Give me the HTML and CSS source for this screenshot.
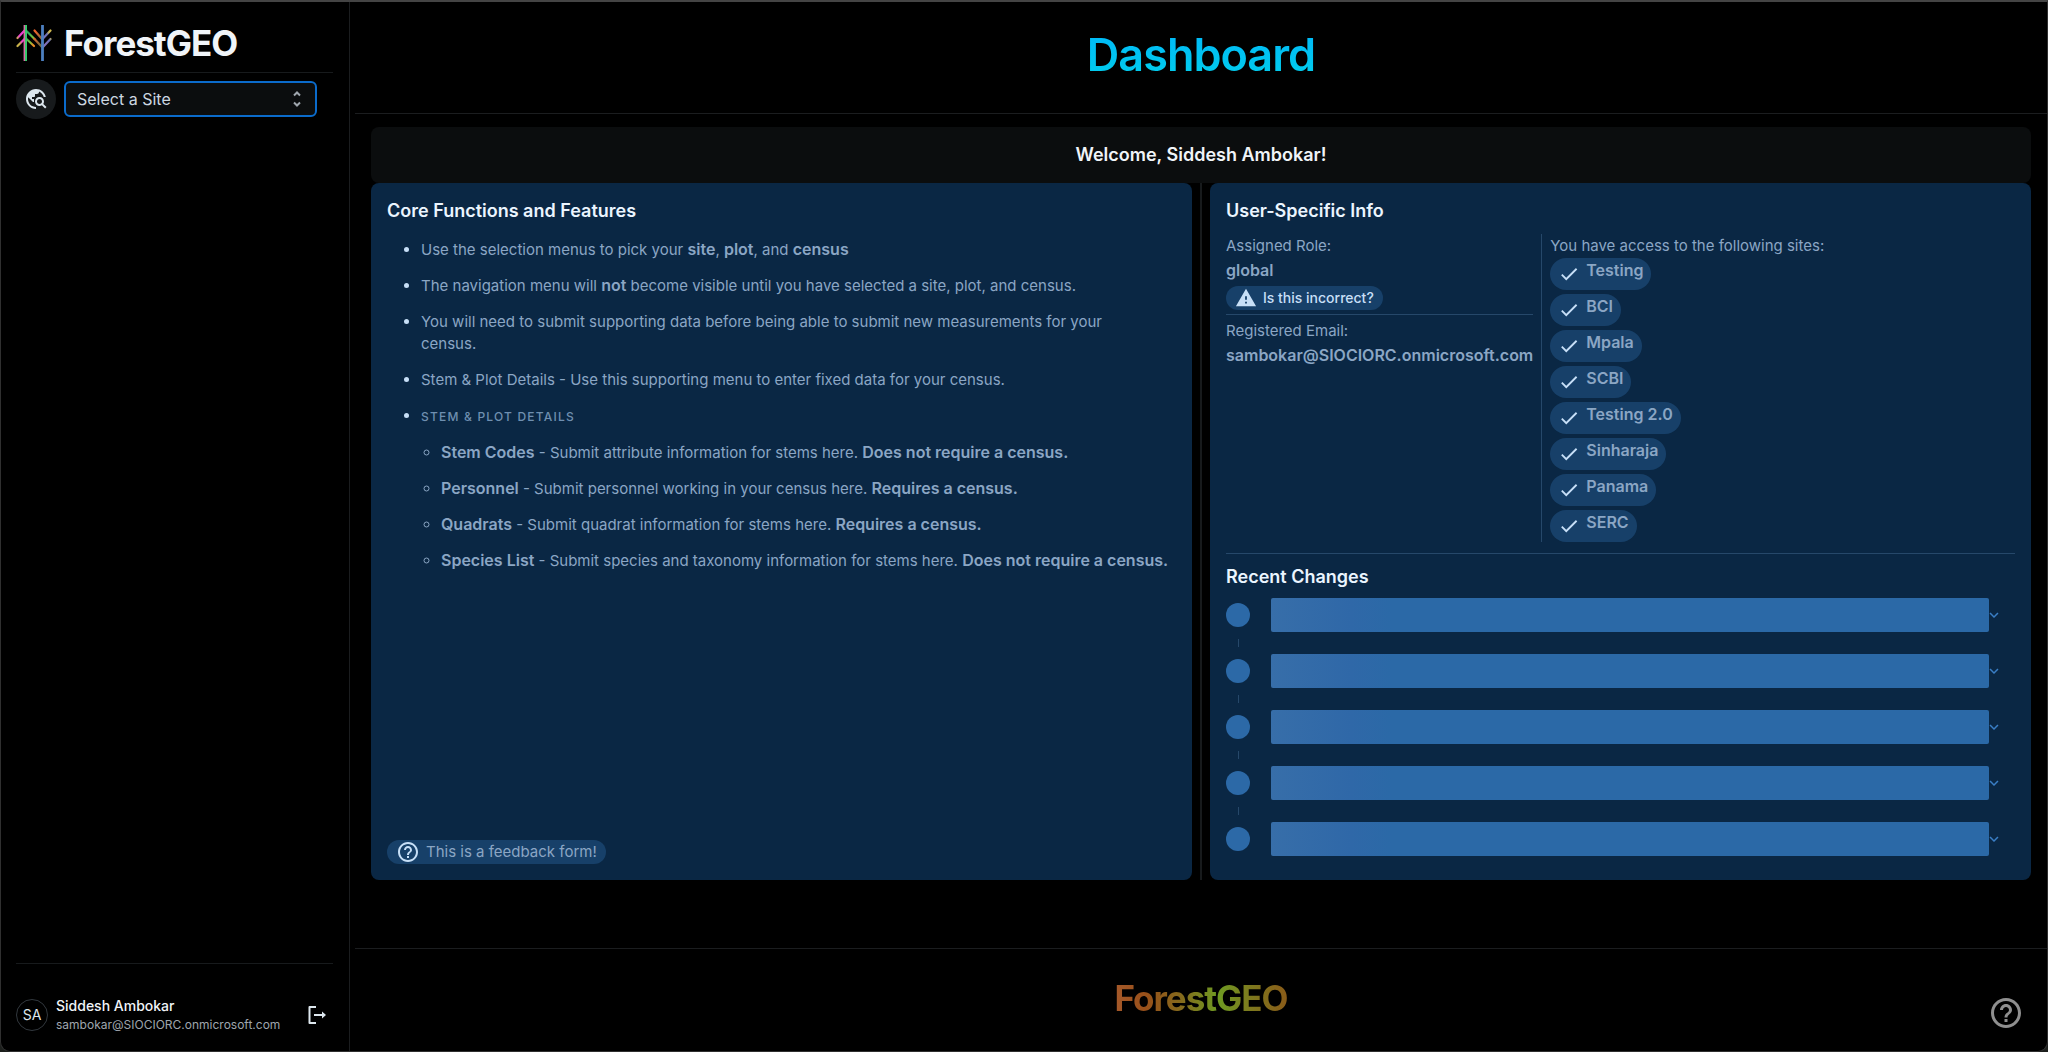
FILE: index.html
```html
<!DOCTYPE html>
<html lang="en">
<head>
<meta charset="utf-8">
<meta name="viewport" content="width=device-width, initial-scale=1">
<title>ForestGEO Dashboard</title>
<link rel="stylesheet" href="styles.css">
</head>
<body>
<svg class="sprite" aria-hidden="true">
  <symbol id="i-help" viewBox="0 0 24 24"><path d="M11 18h2v-2h-2v2zm1-16C6.48 2 2 6.48 2 12s4.480 10 10 10 10-4.480 10-10S17.520 2 12 2zm0 18c-4.410 0-8-3.590-8-8s3.590-8 8-8 8 3.590 8 8-3.590 8-8 8zm0-14c-2.210 0-4 1.790-4 4h2c0-1.100.9-2 2-2s2 .9 2 2c0 2-3 1.750-3 5h2c0-2.250 3-2.500 3-5 0-2.210-1.790-4-4-4z"/></symbol>
  <symbol id="i-check" viewBox="0 0 24 24"><path d="M9 16.170 4.830 12l-1.420 1.410L9 19 21 7l-1.410-1.410z"/></symbol>
  <symbol id="i-down" viewBox="0 0 24 24"><path d="M7.410 8.590 12 13.170l4.590-4.580L18 10l-6 6-6-6z"/></symbol>
</svg>
<div class="app">
  <aside class="sidebar">
    <div class="brand">
      <svg class="brand-mark" viewBox="0 0 36 36" aria-hidden="true">
        <defs>
          <linearGradient id="g1" x1="1" y1="0" x2="0" y2="1"><stop offset=".55" stop-color="#e83fd0"/><stop offset=".8" stop-color="#c9b24a"/></linearGradient>
          <linearGradient id="g2" x1="0" y1="0" x2="1" y2="1"><stop offset=".2" stop-color="#2fae5c"/><stop offset=".6" stop-color="#7fc13a"/><stop offset=".9" stop-color="#f08a24"/></linearGradient>
          <linearGradient id="g3" x1="0" y1="0" x2="1" y2="1"><stop offset=".1" stop-color="#f0642a"/><stop offset=".8" stop-color="#7a6a3c"/></linearGradient>
          <linearGradient id="g4" x1="0" y1="1" x2="1" y2="0"><stop offset=".2" stop-color="#8470b8"/><stop offset=".65" stop-color="#6a72b8"/><stop offset=".85" stop-color="#cdb84e"/></linearGradient>
        </defs>
        <g fill="none" stroke-width="2.200" stroke-linecap="round">
          <path stroke="url(#g1)" d="M9 5 1.500 13M9 13.500 1.500 21"/>
          <path stroke="url(#g2)" d="M10.500 6 18.500 14M10.500 14 18 21"/>
          <path stroke="url(#g3)" d="M18.500 5.500 26 14M18.500 14 26 22"/>
          <path stroke="url(#g4)" d="M27 13.500 34.500 5.500M27 22 34.500 14"/>
        </g>
        <path d="M8.300 0v36" stroke="#d96aa6" stroke-width="1.400"/>
        <path d="M10 0v36" stroke="#37c66b" stroke-width="2"/>
        <path d="M26.500 0v36" stroke="#4c7fc0" stroke-width="2.800"/>
      </svg>
      <span class="wordmark">ForestGEO</span>
    </div>
    <div class="site-row">
      <span class="site-avatar">
        <svg viewBox="0 0 24 24" aria-hidden="true"><path d="M19.300 16.900c.4-.7.7-1.500.7-2.400 0-2.500-2-4.500-4.500-4.500S11 12 11 14.500s2 4.500 4.500 4.500c.9 0 1.700-.3 2.400-.7l3.200 3.200 1.400-1.400-3.200-3.200zm-3.800.1c-1.400 0-2.500-1.100-2.500-2.500s1.100-2.500 2.500-2.500 2.500 1.100 2.500 2.500-1.100 2.500-2.500 2.500zM12 20v2C6.480 22 2 17.520 2 12S6.480 2 12 2c4.840 0 8.870 3.440 9.800 8h-2.070c-.64-2.460-2.400-4.470-4.730-5.410V5c0 1.100-.9 2-2 2h-2v2c0 .55-.45 1-1 1H8v2h2v3H9l-4.790-4.790C4.080 10.790 4 11.380 4 12c0 4.410 3.590 8 8 8z"/></svg>
      </span>
      <div class="select-wrap">
        <select class="site-select" aria-label="Select a Site"><option>Select a Site</option></select>
        <svg class="select-arrows" viewBox="0 0 16 24" aria-hidden="true"><path d="m5 8.500 3-3 3 3M5 15.500l3 3 3-3"/></svg>
      </div>
    </div>
    <div class="account">
      <span class="user-avatar">SA</span>
      <div class="user-text">
        <span class="user-name">Siddesh Ambokar</span>
        <span class="user-mail">sambokar@SIOCIORC.onmicrosoft.com</span>
      </div>
      <button class="logout" type="button" aria-label="Log out">
        <svg viewBox="0 0 20 20" aria-hidden="true"><path d="M9 2H2.500v16H9M7 10h10" fill="none" stroke="currentColor" stroke-width="2" stroke-linejoin="round"/><path d="m15 6.500 4 3.500-4 3.500z" fill="currentColor"/></svg>
      </button>
    </div>
  </aside>
  <main class="main">
    <header class="page-header"><h1>Dashboard</h1></header>
    <div class="content">
      <div class="welcome">Welcome, Siddesh Ambokar!</div>
      <div class="cards">
        <section class="card">
          <h2>Core Functions and Features</h2>
          <ul class="features">
            <li>Use the selection menus to pick your <b>site</b>, <b>plot</b>, and <b>census</b></li>
            <li>The navigation menu will <b>not</b> become visible until you have selected a site, plot, and census.</li>
            <li>You will need to submit supporting data before being able to submit new measurements for your<br>census.</li>
            <li>Stem &amp; Plot Details - Use this supporting menu to enter fixed data for your census.</li>
            <li><span class="overline">Stem &amp; Plot Details</span>
              <ul class="sub">
                <li><b>Stem Codes</b> - Submit attribute information for stems here. <b>Does not require a census.</b></li>
                <li><b>Personnel</b> - Submit personnel working in your census here. <b>Requires a census.</b></li>
                <li><b>Quadrats</b> - Submit quadrat information for stems here. <b>Requires a census.</b></li>
                <li><b>Species List</b> - Submit species and taxonomy information for stems here. <b>Does not require a census.</b></li>
              </ul>
            </li>
          </ul>
          <button class="chip feedback" type="button"><svg viewBox="0 0 24 24" aria-hidden="true"><use href="#i-help"/></svg>This is a feedback form!</button>
        </section>
        <div class="split"></div>
        <section class="card">
          <h2>User-Specific Info</h2>
          <div class="info">
            <div class="info-left">
              <span>Assigned Role:</span>
              <b>global</b>
              <button class="chip incorrect" type="button"><svg viewBox="0 0 24 24" aria-hidden="true"><path d="M1 21h22L12 2 1 21zm12-3h-2v-2h2v2zm0-4h-2v-4h2v4z"/></svg>Is this incorrect?</button>
              <hr>
              <span>Registered Email:</span>
              <b>sambokar@SIOCIORC.onmicrosoft.com</b>
            </div>
            <div class="info-right">
              <span>You have access to the following sites:</span>
              <ul class="sites">
                <li class="chip"><svg viewBox="0 0 24 24"><use href="#i-check"/></svg><b>Testing</b></li>
                <li class="chip"><svg viewBox="0 0 24 24"><use href="#i-check"/></svg><b>BCI</b></li>
                <li class="chip"><svg viewBox="0 0 24 24"><use href="#i-check"/></svg><b>Mpala</b></li>
                <li class="chip"><svg viewBox="0 0 24 24"><use href="#i-check"/></svg><b>SCBI</b></li>
                <li class="chip"><svg viewBox="0 0 24 24"><use href="#i-check"/></svg><b>Testing 2.0</b></li>
                <li class="chip"><svg viewBox="0 0 24 24"><use href="#i-check"/></svg><b>Sinharaja</b></li>
                <li class="chip"><svg viewBox="0 0 24 24"><use href="#i-check"/></svg><b>Panama</b></li>
                <li class="chip"><svg viewBox="0 0 24 24"><use href="#i-check"/></svg><b>SERC</b></li>
              </ul>
            </div>
          </div>
          <hr>
          <h2>Recent Changes</h2>
          <ul class="changes">
            <li><span class="dot"></span><span class="bar"></span><button type="button" aria-label="Expand"><svg viewBox="0 0 24 24"><use href="#i-down"/></svg></button></li>
            <li><span class="dot"></span><span class="bar"></span><button type="button" aria-label="Expand"><svg viewBox="0 0 24 24"><use href="#i-down"/></svg></button></li>
            <li><span class="dot"></span><span class="bar"></span><button type="button" aria-label="Expand"><svg viewBox="0 0 24 24"><use href="#i-down"/></svg></button></li>
            <li><span class="dot"></span><span class="bar"></span><button type="button" aria-label="Expand"><svg viewBox="0 0 24 24"><use href="#i-down"/></svg></button></li>
            <li><span class="dot"></span><span class="bar"></span><button type="button" aria-label="Expand"><svg viewBox="0 0 24 24"><use href="#i-down"/></svg></button></li>
          </ul>
        </section>
      </div>
    </div>
    <footer class="footer"><span class="wordmark tinted">ForestGEO</span></footer>
  </main>
  <button class="help" type="button" aria-label="Help"><svg viewBox="0 0 24 24"><use href="#i-help"/></svg></button>
</div>
</body>
</html>
```
FILE: styles.css
```css
*, *::before, *::after { box-sizing: border-box; }

body {
  margin: 0;
  background: #1c1f1c;
  color: #8ba6c4;
  font: 400 15px/24px Inter, "Liberation Sans", sans-serif;
}

h1, h2, ul { margin: 0; padding: 0; }
button { border: 0; padding: 0; background: none; font: inherit; color: inherit; cursor: pointer; }
svg { display: block; fill: currentColor; flex: none; }
b { font-size: 16px; font-weight: 600; }
.sprite { position: absolute; width: 0; height: 0; }

.app {
  position: relative;
  display: flex;
  min-height: 100vh;
  background: #000;
  border: 1px solid #303030;
  border-top: 2px solid #444;
  border-radius: 0 0 10px 10px;
}

/* Sidebar */
.sidebar {
  display: flex;
  flex-direction: column;
  width: 349px;
  flex: none;
  padding: 16px 16px 17px 15px;
  border-right: 1px solid #1b1d1f;
}
.brand {
  display: flex;
  align-items: center;
  gap: 12px;
  height: 55px;
  padding-bottom: 4px;
  border-bottom: 1px solid #171a1c;
}
.brand-mark { width: 36px; height: 36px; }
.wordmark { font-size: 35px; line-height: 40px; font-weight: 700; letter-spacing: -1px; color: #f0f4f8; }
.site-row { display: flex; align-items: center; gap: 8px; padding: 6px 16px 0 0; }
.site-avatar {
  display: grid;
  place-items: center;
  width: 40px;
  height: 40px;
  border-radius: 50%;
  background: #171a1c;
  color: #dde7ee;
}
.site-avatar svg { width: 24px; height: 24px; }
.select-wrap { position: relative; flex: 1; }
.site-select {
  display: block;
  appearance: none;
  width: 100%;
  height: 36px;
  padding: 0 32px 0 11px;
  border: 2px solid #0b6bcb;
  border-radius: 6px;
  background: #0b0d0e;
  color: #cdd7e1;
  font: inherit;
  font-size: 16px;
}
.select-arrows {
  position: absolute;
  right: 12px;
  top: 6px;
  width: 16px;
  height: 24px;
  fill: none;
  stroke: #9fa6ad;
  stroke-width: 2;
  pointer-events: none;
}
.account {
  display: flex;
  align-items: center;
  gap: 8px;
  margin-top: auto;
  padding-top: 32px;
  border-top: 1px solid #171a1c;
}
.user-avatar {
  display: grid;
  place-items: center;
  width: 32px;
  height: 32px;
  border: 1px solid #32383e;
  border-radius: 50%;
  color: #dde7ee;
  font-size: 14px;
}
.user-text { display: flex; flex-direction: column; flex: 1; }
.user-name { color: #f0f4f8; font-size: 14px; line-height: 20px; font-weight: 500; }
.user-mail { color: #9fa6ad; font-size: 12px; line-height: 18px; }
.logout { margin-right: 6px; color: #dde7ee; }
.logout svg { width: 20px; height: 20px; }

/* Main column */
.main { display: flex; flex-direction: column; flex: 1; min-width: 0; padding-left: 5px; }
.page-header {
  display: grid;
  place-items: center;
  height: 112px;
  padding-bottom: 6px;
  border-bottom: 1px solid #1b1d1f;
}
h1 {
  font-size: 45px;
  line-height: 56px;
  font-weight: 600;
  letter-spacing: -1px;
  background: linear-gradient(#00b7fa, #01cfea);
  background-clip: text;
  color: transparent;
}
.content { flex: 1; padding: 13px 16px; }
.welcome {
  padding: 16px;
  border-radius: 8px;
  background: #0b0d0e;
  color: #f0f4f8;
  font-size: 18px;
  font-weight: 600;
  text-align: center;
}
.cards { display: grid; grid-template-columns: 1fr 2px 1fr; gap: 8px; }
.split { background: #171a1c; }
.card {
  display: flex;
  flex-direction: column;
  min-width: 0;
  padding: 16px 16px 24px;
  border-radius: 8px;
  background: #0a2744;
}
.card:first-child { padding-bottom: 16px; }
h2 { color: #ebf5ff; font-size: 18px; line-height: 24px; font-weight: 600; }
hr { height: 1px; margin: 0; border: 0; background: #26486a; width: 100%; }

.features { margin-top: 9px; padding-left: 34px; line-height: 22px; }
.features li { padding: 7px 0; }
.features b { line-height: 20px; }
.features > li::marker { color: #c7dff7; }
.overline {
  display: block;
  color: #6f8fb0;
  font-size: 12px;
  font-weight: 500;
  letter-spacing: 0.1em;
  text-transform: uppercase;
}
.sub { padding: 7px 0 0 20px; list-style: circle; }
.sub li:last-child { padding-bottom: 0; }

.chip {
  display: flex;
  align-items: center;
  align-self: flex-start;
  gap: 6px;
  height: 24px;
  padding: 0 9px;
  border-radius: 16px;
  background: #174069;
}
.chip svg { color: #c7dff7; }
.feedback { margin-top: auto; }
.feedback svg { width: 24px; height: 24px; }
.incorrect { color: #c7dff7; font-size: 14px; font-weight: 500; }
.incorrect svg { width: 22px; height: 24px; }

.info { display: flex; margin-top: 11px; }
.info-left { display: flex; flex-direction: column; padding-right: 8px; border-right: 1px solid #26486a; }
.info-left .chip { margin-top: 4px; }
.info-left hr { margin: 4px 0; }
.info-right { padding-left: 8px; }
.sites { display: flex; flex-direction: column; gap: 4px; list-style: none; }
.sites .chip { height: 32px; padding: 0 8px; }
.sites svg { width: 22px; height: 24px; }
.sites b { padding-bottom: 8px; }
.info + hr { margin: 11px 0; }

.changes { display: flex; flex-direction: column; gap: 22px; margin-top: 9px; list-style: none; }
.changes li { position: relative; display: flex; align-items: center; height: 34px; padding-right: 16px; }
.changes li + li::before {
  content: "";
  position: absolute;
  left: 12px;
  top: -15px;
  width: 1px;
  height: 8px;
  background: #26486a;
}
.dot { width: 24px; height: 24px; margin-right: 21px; border-radius: 50%; background: #2c69a7; }
.bar {
  flex: 1;
  height: 34px;
  border-radius: 2px;
  background: linear-gradient(90deg, #376ea9 0, #2f68a8 80px, #2b69a7 120px);
}
.changes button { width: 10px; color: #3a7ec4; }
.changes svg { width: 18px; height: 18px; margin: 0 -4px; }

.footer {
  display: grid;
  place-items: center;
  height: 103px;
  padding-bottom: 4px;
  border-top: 1px solid #1b1d1f;
}
.tinted {
  background: linear-gradient(90deg, #a5592a, #98501a 18%, #85691c 38%, #6f9a22 60%, #7d7a1e 78%, #8a5a18);
  background-clip: text;
  color: transparent;
}
.help { position: absolute; right: 23px; bottom: 20px; color: #8f8f8f; }
.help svg { width: 36px; height: 36px; }
```
